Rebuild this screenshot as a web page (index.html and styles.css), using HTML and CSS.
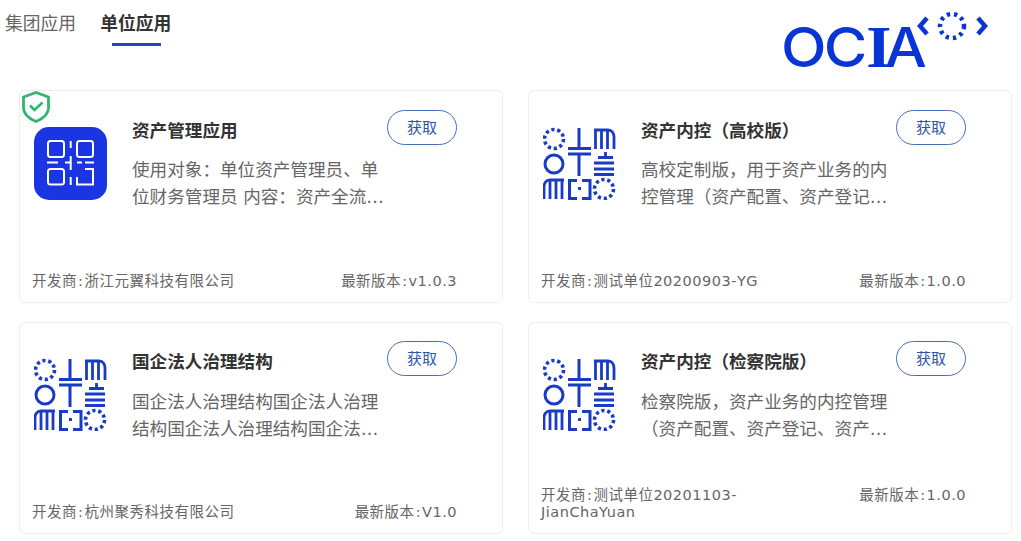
FILE: index.html
```html
<!DOCTYPE html>
<html lang="zh-CN">
<head>
    <meta charset="UTF-8">
    <meta name="viewport" content="width=device-width, initial-scale=1.0">
    <title>应用中心</title>
    <link rel="stylesheet" href="styles.css">
</head>
<body>

    <svg class="defs" width="0" height="0">
        <symbol id="seal" viewBox="1 0 73 73">
            <g fill="none" stroke="#1a3cc4" stroke-width="3">
                <!-- top row -->
                <circle cx="12" cy="12" r="9.5" stroke-width="3.6" stroke-dasharray="3.2 2.77"/>
                <path d="M37 1v21M26 21.5h23"/>
                <path d="M52 3h14c4 0 6 3 6 7v12M53.5 3v19M59.5 3v19M65.5 3v19" stroke-width="2.8"/>
                <!-- middle row -->
                <circle cx="12" cy="37" r="9"/>
                <path d="M26 27h23M37 27v22"/>
                <path d="M56 30.5h15M63.5 25v5M52 36h20M52 42h20M52 47.5h20" stroke-width="2.8"/>
                <!-- bottom row -->
                <path d="M22 53H8c-4 0-6 3-6 7v12M8 53v19M14 53v19M20 53v19" stroke-width="2.8"/>
                <path d="M35 53.5H27.5v18H35M40 53.5h8v18h-8"/>
                <circle cx="62" cy="62" r="9.5" stroke-width="3.6" stroke-dasharray="3.2 2.77"/>
            </g>
            <rect x="36" y="60" width="3" height="3" fill="#1a3cc4"/>
        </symbol>
    </svg>

    <div class="top">
        <div class="tabs">
            <span class="tab">集团应用</span>
            <span class="tab active">单位应用</span>
        </div>
        <svg class="logo" width="210" height="72" viewBox="0 0 210 72">
            <text y="67" class="logo-text" transform="scale(1.08 1)"><tspan x="0 39.5">OC</tspan><tspan x="79" class="logo-i">I</tspan><tspan x="96">A</tspan></text>
            <path d="M146 18l-7 8 7 8M197 18l7 8-7 8" fill="none" stroke="#0a35d6" stroke-width="4.5"/>
            <circle cx="171" cy="26" r="12" fill="none" stroke="#0a35d6" stroke-width="4.5" stroke-dasharray="3.3 3.98"/>
        </svg>
    </div>

    <div class="grid">
        <div class="card">
            <svg class="shield" width="32" height="34" viewBox="0 0 32 34">
                <path d="M16 2.5l12.5 4.5v11c0 6-5.5 10.5-12.5 13.5C9 28.5 3.5 24 3.5 18V7z" fill="#fff" stroke="#30b56f" stroke-width="2.8" stroke-linejoin="round"/>
                <path d="M10 15.5l4.500 4.500 8-7.500" fill="none" stroke="#30b56f" stroke-width="2.5"/>
            </svg>
            <div class="card-main">
                <svg class="app-icon" width="73" height="73" viewBox="0 0 73 73">
                    <rect width="73" height="73" rx="15" fill="#1c35e2"/>
                    <g fill="none" stroke="#fff" stroke-width="2">
                        <rect x="14" y="14" width="16" height="16" rx="2.5"/>
                        <rect x="43" y="14" width="16" height="16" rx="2.5"/>
                        <rect x="14" y="42" width="16" height="15.5" rx="2.5"/>
                        <path d="M36.7 14v7M36.7 29v14M36.7 50v8M13 35.5h11M31 35.5h6M43 35.5h5M51 35.5h9M43 50v7.5h16V42h-8"/>
                    </g>
                </svg>
                <div class="card-text">
                    <div class="card-head">
                        <h3>资产管理应用</h3>
                        <button class="get-btn">获取</button>
                    </div>
                    <p class="desc">使用对象&#xFF1A;单位资产管理员、单位财务管理员 内容&#xFF1A;资产全流程管理应用&#xFF0C;覆盖资产全生命周期的管理</p>
                </div>
            </div>
            <div class="card-foot">
                <span class="dev">开发商<i class="sep">:</i>浙江元翼科技有限公司</span>
                <span class="ver">最新版本<i class="sep">:</i>v1.0.3</span>
            </div>
        </div>

        <div class="card">
            <div class="card-main">
                <svg class="app-icon" width="73" height="73"><use href="#seal"/></svg>
                <div class="card-text">
                    <div class="card-head">
                        <h3>资产内控&#xFF08;高校版&#xFF09;</h3>
                        <button class="get-btn">获取</button>
                    </div>
                    <p class="desc">高校定制版&#xFF0C;用于资产业务的内控管理&#xFF08;资产配置、资产登记、资产使用、资产处置等业务&#xFF09;</p>
                </div>
            </div>
            <div class="card-foot">
                <span class="dev">开发商<i class="sep">:</i>测试单位20200903-YG</span>
                <span class="ver">最新版本<i class="sep">:</i>1.0.0</span>
            </div>
        </div>

        <div class="card">
            <div class="card-main">
                <svg class="app-icon" width="73" height="73"><use href="#seal"/></svg>
                <div class="card-text">
                    <div class="card-head">
                        <h3>国企法人治理结构</h3>
                        <button class="get-btn">获取</button>
                    </div>
                    <p class="desc">国企法人治理结构国企法人治理结构国企法人治理结构国企法人治理结构国企法人治理结构</p>
                </div>
            </div>
            <div class="card-foot">
                <span class="dev">开发商<i class="sep">:</i>杭州聚秀科技有限公司</span>
                <span class="ver">最新版本<i class="sep">:</i>V1.0</span>
            </div>
        </div>

        <div class="card">
            <div class="card-main">
                <svg class="app-icon" width="73" height="73"><use href="#seal"/></svg>
                <div class="card-text">
                    <div class="card-head">
                        <h3>资产内控&#xFF08;检察院版&#xFF09;</h3>
                        <button class="get-btn">获取</button>
                    </div>
                    <p class="desc">检察院版&#xFF0C;资产业务的内控管理&#xFF08;资产配置、资产登记、资产使用、资产处置等业务&#xFF09;</p>
                </div>
            </div>
            <div class="card-foot">
                <span class="dev">开发商<i class="sep">:</i>测试单位20201103-JianChaYuan</span>
                <span class="ver">最新版本<i class="sep">:</i>1.0.0</span>
            </div>
        </div>
    </div>

</body>
</html>
```

FILE: styles.css
```css
body {
    font-family: "DejaVu Sans", "Noto Sans CJK SC", sans-serif;
    background-color: #fff;
    color: #666;
    margin: 0;
    overflow: hidden;
}
.defs {
    position: absolute;
}
.top {
    display: flex;
    justify-content: space-between;
    height: 90px;
}
.tabs {
    display: flex;
    gap: 24px;
    padding-left: 5px;
}
.tab {
    height: 46px;
    line-height: 48px;
    font-size: 17.8px;
    color: #666;
    position: relative;
}
.tab.active {
    font-weight: bold;
    color: #333;
}
.tab.active::after {
    content: "";
    position: absolute;
    left: 12px;
    right: 10px;
    bottom: 0;
    height: 3px;
    background-color: #1f4db8;
}
.logo {
    margin-right: 30px;
}
.logo-text {
    font-family: "Inter", sans-serif;
    font-size: 55px;
    font-weight: 500;
    fill: #0a35d6;
}
.logo-i {
    font-family: "Liberation Serif", serif;
    font-size: 60px;
    font-weight: 700;
}
.grid {
    display: grid;
    grid-template-columns: 484px 484px;
    grid-template-rows: 212.5px 212px;
    column-gap: 25px;
    row-gap: 19px;
    padding-left: 19px;
}
.card {
    display: flex;
    flex-direction: column;
    justify-content: space-between;
    position: relative;
    box-sizing: border-box;
    padding: 19px 45px 12px 12px;
    border: 1px solid #eee;
    border-radius: 6px;
}
.card:nth-child(n+3) {
    padding-top: 18px;
}
.card:nth-child(n+3) .desc {
    margin-top: 13px;
}
.shield {
    position: absolute;
    left: 0;
    top: -1px;
}
.card-main {
    display: flex;
    gap: 25px;
}
.app-icon {
    flex: none;
    margin: 17px 0 0 2px;
}
.card-text {
    flex: 1;
    min-width: 0;
}
.card-head {
    display: flex;
    justify-content: space-between;
}
h3 {
    margin: 9px 0 0;
    font-size: 17.6px;
    line-height: 25px;
    color: #333;
}
.get-btn {
    width: 70px;
    height: 35px;
    padding: 0 0 2px;
    border: 1px solid #4a6db8;
    border-radius: 18px;
    background-color: #fff;
    color: #2f55a8;
    font-family: inherit;
    font-size: 15px;
}
.desc {
    width: 256px;
    margin: 12px 0 0;
    font-size: 17.6px;
    line-height: 27px;
    display: -webkit-box;
    -webkit-box-orient: vertical;
    -webkit-line-clamp: 2;
    overflow: hidden;
}
.card-foot {
    display: flex;
    justify-content: space-between;
    font-size: 14.5px;
    letter-spacing: 0.5px;
    line-height: 17px;
}
.dev {
    width: 225px;
    word-break: break-word;
}
.sep {
    font-style: normal;
    padding: 0 1px;
}
```
